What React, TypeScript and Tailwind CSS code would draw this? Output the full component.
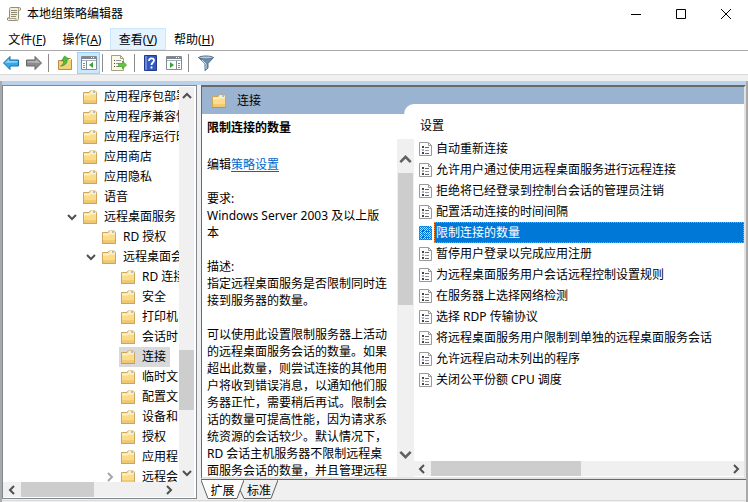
import React from "react";

const FolderIcon = () => (
  <svg width="16" height="16" viewBox="0 0 16 16" className="shrink-0" aria-hidden="true">
    <path d="M1.5 3.5h5.5l1-1.5h5.5l1 1.500v10.500h-13z" fill="#fbdc8b" stroke="#cfa75c" />
    <path d="M8.5 2h5v2h-5z" fill="#f6efda" />
    <path d="M11 2.500h2v1h-2z" fill="#4f95d0" />
    <path d="M2 4.500h5.500l1-.5H14v1.500H8.500l-1 1H2z" fill="#fff0be" />
    <path d="M2 11h12v2.500H2z" fill="#f2ca72" />
    <path d="M1 14.500h14" stroke="#a98a4b" opacity=".6" />
  </svg>
);

const PolicyIcon = ({ selected = false }) => (
  <svg width="14" height="16" viewBox="0 0 14 16" className="shrink-0" aria-hidden="true">
    <path d="M.5 1.5h9l3 3v10H.5z" fill="#fcfcfc" stroke="#9a9a9a" />
    <path d="M9.5 1.5v3h3" fill="none" stroke="#9a9a9a" />
    <path d="M3 5h2v2H3zM3 11h2v2H3z" fill="#444" />
    <path d="M3 8h2v2H3z" fill="#a3adbd" />
    <path d="M6 6.5h4M6 12.5h4" stroke="#666" />
    <path d="M6 9.5h4" stroke="#8f9cb0" />
    {selected && (
      <>
        <defs>
          <pattern id="dither" width="2" height="2" patternUnits="userSpaceOnUse">
            <path d="M0 0h1v1H0zM1 1h1v1H1z" fill="#0078d7" />
          </pattern>
        </defs>
        <path d="M0 1h13v14H0z" fill="url(#dither)" />
        <path d="M0 1h13v14H0z" fill="#0078d7" opacity=".25" />
      </>
    )}
  </svg>
);

const paths = {
  up: "M1 7l4-4 4 4",
  down: "M1 3l4 4 4-4",
  left: "M7 1L3 5l4 4",
  right: "M3 1l4 4-4 4",
};

const Chevron = ({ dir, color = "#505050", size = 10 }: { dir: keyof typeof paths; color?: string; size?: number }) => (
  <svg width={size} height={size} viewBox="0 0 10 10" className="shrink-0" aria-hidden="true">
    <path d={paths[dir]} fill="none" stroke={color} strokeWidth="2" />
  </svg>
);

const TitleIcon = () => (
  <svg width="16" height="16" viewBox="0 0 16 16" aria-hidden="true">
    <path d="M4.5 1.5h9c1.5 0 1.5 3 0 3h-1v8c0 3-2 2-2 2h-8c-1.5 0-1.5-3 0-3h1v-8c0-1 .5-2 1-2z" fill="#f5efd9" stroke="#938d7b" />
    <path d="M12.5 1.5v3M2.5 12.5H10v2" fill="none" stroke="#a9a28c" />
    <path d="M5 4.5h6M5 6.5h6M5 8.5h6M5 10.5h5" stroke="#8e8975" />
  </svg>
);

const BackIcon = () => (
  <svg width="18" height="16" viewBox="0 0 18 16" aria-hidden="true">
    <path d="M1.5 8L8 1.5V5h8.5v6H8v3.5z" fill="#39a9e4" stroke="#1672ad" />
    <path d="M3 8l4-4v2h8.5v1.5z" fill="#8bd5f7" />
  </svg>
);

const ForwardIcon = () => (
  <svg width="18" height="16" viewBox="0 0 18 16" aria-hidden="true">
    <path d="M16.5 8L10 1.5V5H1.5v6H10v3.5z" fill="#8b8b8b" stroke="#666" />
    <path d="M15 8l-4-4v2H2.5v1.5z" fill="#b5b5b5" />
  </svg>
);

const UpFolderIcon = () => (
  <svg width="16" height="16" viewBox="0 0 16 16" aria-hidden="true">
    <path d="M1.5 5.500h5l1-2h6l1 1v10h-13z" fill="#f5d27c" stroke="#b98d3e" />
    <path d="M10 4h4v1h-4z" fill="#fff" />
    <path d="M3.500 11C6 10 7 8 6.500 5.500L4.500 6l3-5 4.500 3-2 .500c.500 3.500-2 6.500-6.500 6.500z" fill="#55bb3c" stroke="#2f8a22" strokeWidth=".6" />
  </svg>
);

const PaneIcon = ({ flipped = false }) => (
  <svg width="16" height="14" viewBox="0 0 16 14" aria-hidden="true">
    <path d="M.5.5h15v13H.5z" fill="#fff" stroke="#858b93" />
    <path d="M1 1h14v2H1z" fill="#7d8794" />
    <path d="M10 1.5h1M12 1.5h1" stroke="#fff" />
    <path d="M1 4.5h14" stroke="#a8aeb6" />
    {flipped ? (
      <>
        <path d="M10.5 5v8M12 7.5h2M12 9.5h2M12 11.5h2" stroke="#858b93" />
        <path d="M4 6v6l4-3z" fill="#35a436" />
      </>
    ) : (
      <>
        <path d="M5.5 5v8M2 7.5h2M2 9.5h2M2 11.5h2" stroke="#858b93" />
        <path d="M12 6v6L8 9z" fill="#35a436" />
      </>
    )}
  </svg>
);

const ExportIcon = () => (
  <svg width="16" height="16" viewBox="0 0 16 16" aria-hidden="true">
    <path d="M.5.5h9l3 3v12H.5z" fill="#fdf8e2" stroke="#a89f7f" />
    <path d="M9.5.5v3h3" fill="none" stroke="#a89f7f" />
    <path d="M3 5.5h1M3 8.5h1M3 11.5h1" stroke="#444" />
    <path d="M5 5.5h5M5 8.5h3M5 11.5h3" stroke="#8f8fb0" />
    <path d="M7.5 8.5h4V6l4 4-4 4v-2.5h-4z" fill="#62c644" stroke="#3c9a2b" strokeWidth=".7" />
  </svg>
);

const HelpIcon = () => (
  <svg width="14" height="16" viewBox="0 0 14 16" aria-hidden="true">
    <path d="M.5.5h12v15H.5z" fill="#3159c4" stroke="#203a8c" />
    <path d="M1 1h2v14H1z" fill="#6f8cdc" />
    <path d="M5 6c0-3.5 5-3.5 5-.5 0 2-2.5 2-2.5 4.5M7.5 11.5v2" fill="none" stroke="#fff" strokeWidth="1.8" />
  </svg>
);

const FilterIcon = () => (
  <svg width="16" height="16" viewBox="0 0 16 16" aria-hidden="true">
    <path d="M.5 2.5h15L10 8.500V13l-3 2.500v-7z" fill="#6d8fae" stroke="#53718d" />
    <ellipse cx="8" cy="2.5" rx="7" ry="1.5" fill="#b7cbdc" stroke="#53718d" />
    <path d="M4 5l4 4v5" fill="none" stroke="#c9dae8" />
  </svg>
);

const menus = [
  { name: "文件", key: "F" },
  { name: "操作", key: "A" },
  { name: "查看", key: "V", active: true },
  { name: "帮助", key: "H" },
];

const tree = [
  { name: "应用程序包部署", level: 0 },
  { name: "应用程序兼容性", level: 0 },
  { name: "应用程序运行时", level: 0 },
  { name: "应用商店", level: 0 },
  { name: "应用隐私", level: 0 },
  { name: "语音", level: 0 },
  { name: "远程桌面服务", level: 0, open: true },
  { name: "RD 授权", level: 1 },
  { name: "远程桌面会", level: 1, open: true },
  { name: "RD 连接", level: 2 },
  { name: "安全", level: 2 },
  { name: "打印机", level: 2 },
  { name: "会话时", level: 2 },
  { name: "连接", level: 2, selected: true },
  { name: "临时文", level: 2 },
  { name: "配置文", level: 2 },
  { name: "设备和", level: 2 },
  { name: "授权", level: 2 },
  { name: "应用程", level: 2 },
  { name: "远程会", level: 2, closed: true },
];

const indents = ["pl-16", "pl-[83px]", "pl-[102px]"];

const policies = [
  "自动重新连接",
  "允许用户通过使用远程桌面服务进行远程连接",
  "拒绝将已经登录到控制台会话的管理员注销",
  "配置活动连接的时间间隔",
  "限制连接的数量",
  "暂停用户登录以完成应用注册",
  "为远程桌面服务用户会话远程控制设置规则",
  "在服务器上选择网络检测",
  "选择 RDP 传输协议",
  "将远程桌面服务用户限制到单独的远程桌面服务会话",
  "允许远程启动未列出的程序",
  "关闭公平份额 CPU 调度",
];

const Divider = () => <div className="h-[18px] w-px bg-[#8c8c8c]" />;

const TitleBar = () => (
  <header className="flex h-[27px] shrink-0 items-center pl-[6px]">
    <TitleIcon />
    <h1 className="ml-[5px]">本地组策略编辑器</h1>
    <div className="ml-auto flex">
      <button aria-label="最小化" className="flex h-6 w-[45px] items-center justify-center">
        <svg width="10" height="10" viewBox="0 0 10 10">
          <path d="M0 5.5h10" stroke="#000" />
        </svg>
      </button>
      <button aria-label="最大化" className="flex h-6 w-[45px] items-center justify-center">
        <svg width="10" height="10" viewBox="0 0 10 10">
          <path d="M.5.5h9v9h-9z" fill="none" stroke="#000" />
        </svg>
      </button>
      <button aria-label="关闭" className="flex h-6 w-[45px] items-center justify-center">
        <svg width="10" height="10" viewBox="0 0 10 10">
          <path d="M0 0l10 10M10 0L0 10" stroke="#000" />
        </svg>
      </button>
    </div>
  </header>
);

const MenuBar = () => (
  <nav className="flex h-6 shrink-0 items-center border-b border-[#a9a9a9]">
    {menus.map((m) => (
      <button
        key={m.key}
        className={
          m.active
            ? "h-[22px] w-14 border border-[#cce8ff] bg-[#e5f3ff] pt-[2px]"
            : "h-[22px] w-14 pt-[2px] first:w-[54px]"
        }
      >
        {m.name}(<u>{m.key}</u>)
      </button>
    ))}
  </nav>
);

const Toolbar = () => (
  <div className="flex h-6 shrink-0 items-center border-b border-[#d9d9d9] pl-[2px]">
    <button aria-label="后退"><BackIcon /></button>
    <button aria-label="前进" className="mr-[5px] ml-[5px]"><ForwardIcon /></button>
    <Divider />
    <button aria-label="向上" className="mr-1 ml-2"><UpFolderIcon /></button>
    <button
      aria-label="显示控制台树"
      className="mr-[2px] flex h-[22px] w-[23px] items-center justify-center border border-[#99d1ff] bg-[#cce8ff]"
    >
      <PaneIcon />
    </button>
    <Divider />
    <button aria-label="导出列表" className="mr-[7px] ml-2"><ExportIcon /></button>
    <Divider />
    <button aria-label="帮助" className="ml-[9px]"><HelpIcon /></button>
    <button aria-label="显示操作窗格" className="mr-[6px] ml-2"><PaneIcon flipped /></button>
    <Divider />
    <button aria-label="筛选器" className="ml-[9px]"><FilterIcon /></button>
  </div>
);

const TreePane = () => (
  <aside className="flex w-[195px] shrink-0 flex-col border border-[#828790] bg-white pt-px pr-[2px] pb-px">
    <div className="flex min-h-0 flex-1">
      <ul className="min-w-0 flex-1 overflow-hidden">
        {tree.map((item, i) => (
          <li key={i} className={`flex h-5 items-center whitespace-nowrap ${indents[item.level]}`}>
            <span className="flex w-[14px] shrink-0">
              {item.open && <Chevron dir="down" />}
              {item.closed && <Chevron dir="right" color="#a6a6a6" />}
            </span>
            <button
              className={
                item.selected
                  ? "flex h-5 items-center gap-[6px] bg-[#d9d9d9] pr-1 pl-px"
                  : "flex h-5 items-center gap-[6px] pl-px"
              }
            >
              <FolderIcon />
              {item.name}
            </button>
          </li>
        ))}
      </ul>
      <div className="flex w-[15px] shrink-0 flex-col items-center bg-[#f0f0f0] pt-1 pb-1">
        <button aria-label="向上滚动"><Chevron dir="up" /></button>
        <div className="flex-[249] basis-0" />
        <div className="w-full flex-[60] basis-0 bg-[#cdcdcd]" />
        <div className="flex-[58] basis-0" />
        <button aria-label="向下滚动"><Chevron dir="down" /></button>
      </div>
    </div>
    <div className="flex h-[15px] shrink-0 items-center bg-[#f0f0f0] pr-5 pl-1">
      <button aria-label="向左滚动"><Chevron dir="left" /></button>
      <div className="ml-1 h-full w-[73px] bg-[#cdcdcd]" />
      <button aria-label="向右滚动" className="ml-auto"><Chevron dir="right" /></button>
    </div>
  </aside>
);

const DescriptionPane = () => (
  <section className="flex w-[212px] shrink-0 flex-col">
    <div className="flex h-[27px] shrink-0 items-center bg-[#9ab3d0] pl-[9px]">
      <FolderIcon />
      <h2 className="ml-[10px]">连接</h2>
      <span className="ml-auto size-[10px] self-end rounded-tl-[10px] bg-white" />
    </div>
    <div className="flex min-h-0 flex-1">
      <div className="min-w-0 flex-1 overflow-hidden pt-[5px] pr-[9px] pl-[5px] leading-[17px]">
        <h3 className="mb-5 font-bold">限制连接的数量</h3>
        <p className="mb-[17px]">
          编辑
          <a href="#settings" className="text-[#0066cc] underline underline-offset-2 [text-decoration-skip-ink:none]">
            策略设置
          </a>
        </p>
        <p>要求:</p>
        <p className="mb-[17px]">Windows Server 2003 及以上版本</p>
        <p>描述:</p>
        <p className="mb-[17px]">指定远程桌面服务是否限制同时连接到服务器的数量。</p>
        <p>
          可以使用此设置限制服务器上活动的远程桌面服务会话的数量。如果超出此数量，则尝试连接的其他用户将收到错误消息，以通知他们服务器正忙，需要稍后再试。限制会话的数量可提高性能，因为请求系统资源的会话较少。默认情况下，RD
          会话主机服务器不限制远程桌面服务会话的数量，并且管理远程
        </p>
      </div>
      <div className="mt-[25px] flex w-[17px] shrink-0 flex-col items-center bg-[#f0f0f0] pt-[14px] pb-4">
        <button aria-label="向上滚动"><Chevron dir="up" size={13} color="#606060" /></button>
        <div className="flex-[7] basis-0" />
        <div className="w-[15px] flex-[132] basis-0 bg-[#cdcdcd]" />
        <div className="flex-[143] basis-0" />
        <button aria-label="向下滚动"><Chevron dir="down" size={13} color="#606060" /></button>
      </div>
    </div>
  </section>
);

const PolicyList = () => (
  <section className="flex min-w-0 flex-1 flex-col pb-px">
    <div className="h-[17px] shrink-0 bg-[#9ab3d0]" />
    <div className="min-h-0 flex-1 overflow-hidden">
      <table className="w-full border-collapse whitespace-nowrap">
        <thead>
          <tr>
            <th className="h-[34px] p-0 pt-[10px] pl-[6px] text-left font-normal">设置</th>
          </tr>
        </thead>
        <tbody>
          {policies.map((name, i) => (
            <tr key={name}>
              <td className="p-0">
                <div className="flex h-[21px] items-center pl-[5px]">
                  <PolicyIcon selected={i === 4} />
                  <span
                    className={
                      i === 4
                        ? "ml-px flex h-[21px] flex-1 items-center border border-dotted border-[#ff8728] bg-[#0078d7] pl-px text-white"
                        : "ml-[3px]"
                    }
                  >
                    {name}
                  </span>
                </div>
              </td>
            </tr>
          ))}
        </tbody>
      </table>
    </div>
    <div className="flex h-[15px] shrink-0 items-center bg-[#f0f0f0] px-[3px]">
      <button aria-label="向左滚动"><Chevron dir="left" /></button>
      <div className="ml-1 h-full w-[150px] bg-[#cdcdcd]" />
      <button aria-label="向右滚动" className="ml-auto"><Chevron dir="right" /></button>
    </div>
  </section>
);

const Tabs = () => (
  <div role="tablist" className="flex h-5 shrink-0 border-t border-[#696969] bg-[#f0f0f0]">
    <button role="tab" aria-selected="true" className="relative h-[19px] w-[43px] pt-[2px]">
      <svg width="43" height="19" viewBox="0 0 43 19" className="absolute inset-0" aria-hidden="true">
        <path d="M0 0h43l-7 18.500H7z" fill="#fff" />
        <path d="M0 0l7 18.500h29L43 0" fill="none" stroke="#606060" />
      </svg>
      <span className="relative">扩展</span>
    </button>
    <button role="tab" aria-selected="false" className="relative -ml-1 h-[19px] w-[38px] pt-[2px]">
      <svg width="38" height="19" viewBox="0 0 38 19" className="absolute inset-0" aria-hidden="true">
        <path d="M0 10l4 8.500h27L38 0" fill="none" stroke="#606060" />
      </svg>
      <span className="relative">标准</span>
    </button>
  </div>
);

const App = () => {
  return (
    <div className="flex h-screen flex-col overflow-hidden bg-white font-['Noto_Sans','Noto_Sans_CJK_SC',sans-serif] text-[12px] leading-4 text-black">
      <TitleBar />
      <MenuBar />
      <Toolbar />
      <div className="h-[6px] shrink-0 bg-[#f0f0f0]" />
      <main className="flex min-h-0 flex-1 flex-col border-x-2 border-[#a9a9a9] bg-[#f0f0f0]">
        <div className="h-1 shrink-0 bg-[#b9d1ea]" />
        <div className="flex min-h-0 flex-1 gap-1">
          <TreePane />
          <div className="flex min-w-0 flex-1 flex-col">
            <div className="flex min-h-0 flex-1 border-t-2 border-r-2 border-b-2 border-l border-t-[#696969] border-r-[#e3e3e3] border-b-[#e3e3e3] border-l-[#696969] bg-white">
              <DescriptionPane />
              <PolicyList />
            </div>
            <Tabs />
          </div>
        </div>
        <div className="mt-px h-[2px] shrink-0 border-t border-[#d9d9d9]" />
      </main>
    </div>
  );
};

export default App;
